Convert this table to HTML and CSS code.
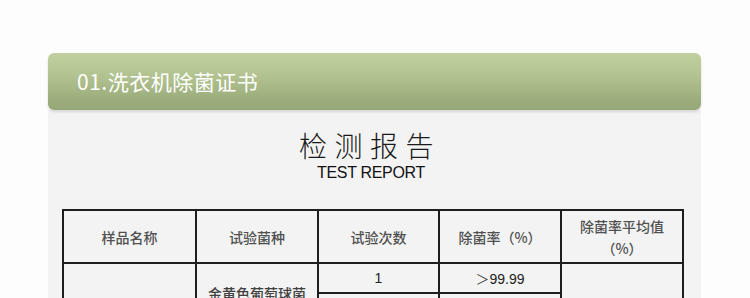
FILE: index.html
```html
<!DOCTYPE html>
<html lang="zh-CN">
<head>
<meta charset="utf-8">
<link rel="stylesheet" href="styles.css">
</head>
<body>
<div class="wrap">
  <div class="bar">01.洗衣机除菌证书</div>
  <div class="panel">
    <div class="title">检测报告</div>
    <div class="subtitle">TEST REPORT</div>
    <table class="report">
      <colgroup>
        <col class="c1"><col class="c2"><col class="c3"><col class="c4"><col class="c5">
      </colgroup>
      <tr class="head">
        <th>样品名称</th>
        <th>试验菌种</th>
        <th>试验次数</th>
        <th>除菌率（%）</th>
        <th>除菌率平均值<br>（%）</th>
      </tr>
      <tr class="row">
        <td rowspan="4"></td>
        <td rowspan="2" class="cn">金黄色葡萄球菌</td>
        <td class="num">1</td>
        <td class="num"><span class="gt">＞</span>99.99</td>
        <td rowspan="4"></td>
      </tr>
      <tr class="row">
        <td class="num">2</td>
        <td class="num"><span class="gt">＞</span>99.99</td>
      </tr>
      <tr class="row">
        <td rowspan="2" class="cn">大肠杆菌</td>
        <td class="num">1</td>
        <td class="num"><span class="gt">＞</span>99.99</td>
      </tr>
      <tr class="row">
        <td class="num">2</td>
        <td class="num"><span class="gt">＞</span>99.99</td>
      </tr>
    </table>
  </div>
</div>
</body>
</html>
```
FILE: styles.css
```css
html, body {
  margin: 0;
  padding: 0;
  background: #fdfdfd;
  overflow: hidden;
}
.wrap {
  width: 653px;
  margin-left: 48px;
  padding-top: 53px;
}
.bar {
  height: 57px;
  box-sizing: border-box;
  padding-left: 29px;
  border-radius: 6px;
  background: linear-gradient(to bottom, #c0d09e 0%, #b2c391 40%, #9dae7d 80%, #97a878 100%);
  box-shadow: 0 2px 3px rgba(0,0,0,0.12);
  color: #ffffff;
  font-family: "Noto Sans CJK SC", "Noto Sans", sans-serif;
  font-size: 21px;
  letter-spacing: 0.5px;
  line-height: 57px;
  position: relative;
  z-index: 1;
}
.panel {
  background: #f3f3f3;
  padding: 21px 0 40px 0;
}
.title {
  text-align: center;
  font-family: "Noto Sans CJK SC", sans-serif;
  font-weight: 300;
  font-size: 28px;
  line-height: 28px;
  letter-spacing: 7.5px;
  color: #1a1a1a;
  padding-right: 9px;
  margin-bottom: 5px;
}
.subtitle {
  text-align: center;
  font-family: "Liberation Sans", Arial, sans-serif;
  font-size: 16px;
  line-height: 18px;
  letter-spacing: -0.3px;
  color: #111;
  padding-right: 7px;
  margin-bottom: 27px;
}
.report {
  border-collapse: collapse;
  width: 620px;
  margin-left: 14px;
  table-layout: fixed;
}
.c1 { width: 133px; }
.c2 { width: 122px; }
.c3 { width: 121px; }
.c4 { width: 122px; }
.c5 { width: 122px; }
.report th, .report td {
  border: 2px solid #1e1e1e;
  padding: 0;
  text-align: center;
  vertical-align: middle;
}
.report th {
  height: 51px;
  font-family: "Noto Sans CJK SC", sans-serif;
  font-weight: 500;
  font-size: 14px;
  line-height: 22px;
  color: #505050;
}
.row td {
  height: 28px;
}
.cn {
  font-family: "Noto Sans CJK SC", sans-serif;
  font-weight: 500;
  font-size: 14px;
  color: #404040;
}
.num {
  font-family: "Liberation Sans", Arial, sans-serif;
  font-size: 14px;
  color: #222;
}
.gt {
  font-family: "Noto Sans CJK SC", sans-serif;
  color: #444;
}
```
